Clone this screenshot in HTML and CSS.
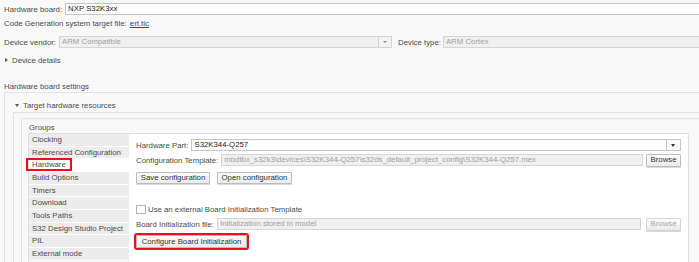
FILE: index.html
```html
<!DOCTYPE html>
<html lang="en">
<head>
    <meta charset="UTF-8">
    <title>Hardware Implementation</title>
    <link rel="stylesheet" href="styles.css">
</head>
<body>
    <div class="top">
        <div class="field-row first">
            <span class="label">Hardware board:</span>
            <div class="input grow edge">NXP S32K3xx</div>
        </div>
        <div class="text-row">Code Generation system target file: <a class="link" href="#">ert.tlc</a></div>
        <div class="field-row spaced">
            <span class="label">Device vendor:</span>
            <div class="combo disabled vendor">
                <span class="value">ARM Compatible</span>
                <span class="arrow"></span>
            </div>
            <span class="label type-label">Device type:</span>
            <div class="input disabled grow edge">ARM Cortex</div>
        </div>
        <div class="toggle-row spaced"><span class="tri right"></span>Device details</div>
        <div class="section-title">Hardware board settings</div>
    </div>

    <div class="panel outer">
        <div class="toggle-row head"><span class="tri down"></span>Target hardware resources</div>
        <div class="panel middle">
            <div class="panel groups">
                <div class="groups-title">Groups</div>
                <div class="groups-box">
                    <ul class="group-list">
                        <li>Clocking</li>
                        <li>Referenced Configuration</li>
                        <li class="selected"><span class="mark">Hardware</span></li>
                        <li>Build Options</li>
                        <li>Timers</li>
                        <li>Download</li>
                        <li>Tools Paths</li>
                        <li>S32 Design Studio Project</li>
                        <li>PIL</li>
                        <li>External mode</li>
                    </ul>
                    <div class="details">
                        <div class="field-row">
                            <span class="label">Hardware Part:</span>
                            <div class="combo grow">
                                <span class="value">S32K344-Q257</span>
                                <span class="arrow dark"></span>
                            </div>
                        </div>
                        <div class="field-row gap3">
                            <span class="label">Configuration Template:</span>
                            <div class="input disabled grow">mbdtbx_s32k3\devices\S32K344-Q257\s32ds_default_project_config\S32K344-Q257.mex</div>
                            <button class="btn browse">Browse</button>
                        </div>
                        <div class="button-row">
                            <button class="btn">Save configuration</button>
                            <button class="btn">Open configuration</button>
                        </div>
                        <div class="check-row">
                            <span class="checkbox"></span>
                            <span>Use an external Board Initialization Template</span>
                        </div>
                        <div class="field-row gap3">
                            <span class="label">Board Initialization file:</span>
                            <div class="input disabled grow">Initialization stored in model</div>
                            <button class="btn browse off">Browse</button>
                        </div>
                        <div class="configure-row">
                            <button class="btn marked">Configure Board Initialization</button>
                        </div>
                    </div>
                </div>
            </div>
        </div>
    </div>
</body>
</html>
```

FILE: styles.css
```css
body {
    margin: 0;
    padding-top: 3px;
    width: 699px;
    height: 262px;
    overflow: hidden;
    font-family: "Liberation Sans", Arial, sans-serif;
    font-size: 7.8px;
    color: #4a4a4a;
    background-color: #f8f8f8;
}

.top {
    padding-left: 4px;
}

.field-row {
    display: flex;
    align-items: center;
    height: 12px;
}

.spaced {
    margin-top: 6px;
}

.field-row.gap3 {
    margin-top: 3px;
}

.label {
    margin-right: 3px;
    white-space: nowrap;
}

.type-label {
    margin-left: 6px;
    margin-right: 2px;
}

.input {
    box-sizing: border-box;
    height: 12px;
    line-height: 10px;
    padding: 0 2px;
    border: 1px solid #c6c6c6;
    background-color: #fff;
    color: #222;
    white-space: nowrap;
    overflow: hidden;
}

.grow {
    flex: 1;
}

.edge {
    margin-right: -6px;
}

.disabled {
    background-color: #f0f0f0;
    border-color: #d6d6d6;
    color: #a0a0a0;
}

.combo {
    box-sizing: border-box;
    display: flex;
    height: 12px;
    border: 1px solid #c6c6c6;
    background-color: #fff;
    color: #222;
}

.combo.disabled {
    background-color: #f0f0f0;
    border-color: #d6d6d6;
    color: #a0a0a0;
}

.combo .value {
    flex: 1;
    line-height: 10px;
    padding: 0 2px;
}

.combo .arrow {
    position: relative;
    width: 12px;
    border-left: 1px solid #d0d0d0;
    background-color: #f3f3f3;
}

.combo .arrow::after {
    content: "";
    position: absolute;
    left: 4px;
    top: 4px;
    border-left: 2px solid transparent;
    border-right: 2px solid transparent;
    border-top: 2px solid #888;
}

.combo .arrow.dark {
    width: 13px;
    background-color: #fafafa;
    border-left-color: #c6c6c6;
}

.combo .arrow.dark::after {
    left: 4px;
    border-left-width: 2.5px;
    border-right-width: 2.5px;
    border-top: 3px solid #333;
}

.vendor {
    width: 333px;
}

.text-row {
    height: 12px;
    line-height: 12px;
    margin-top: 3px;
}

.link {
    color: #1f3fd6;
    text-decoration: underline;
    margin-left: 1px;
}

.toggle-row {
    display: flex;
    align-items: center;
    height: 12px;
}

.tri {
    display: inline-block;
    width: 0;
    height: 0;
    margin-right: 4px;
}

.tri.right {
    border-top: 2px solid transparent;
    border-bottom: 2px solid transparent;
    border-left: 3px solid #555;
    margin-left: 1px;
}

.tri.down {
    border-left: 2px solid transparent;
    border-right: 2px solid transparent;
    border-top: 3px solid #555;
    margin-left: 2px;
    margin-right: 4px;
}

.section-title {
    margin-top: 16px;
    height: 10px;
    line-height: 10px;
}

.panel {
    border: 1px solid #e2e2e2;
    border-right: none;
    border-bottom: none;
}

.outer {
    margin-left: 4px;
    padding-left: 8px;
}

.toggle-row.head {
    margin-top: 6px;
}

.middle {
    margin-top: 1px;
    padding-left: 7px;
    padding-top: 5px;
}

.groups {
    padding-left: 6px;
    padding-top: 3px;
}

.groups-title {
    height: 11px;
    line-height: 11px;
    padding-left: 1px;
}

.groups-box {
    display: flex;
    width: 659px;
    height: 140px;
    border: 1px solid #e0e0e0;
    border-bottom: none;
    background-color: #fff;
}

.group-list {
    list-style: none;
    margin: 0;
    padding: 0;
    width: 100px;
    background-color: #ececec;
}

.group-list li {
    height: 11.67px;
    line-height: 11.67px;
    padding-left: 3px;
    border-bottom: 1px solid #fff;
    white-space: nowrap;
}

.group-list li.selected {
    background-color: #fff;
}

.mark {
    display: inline-block;
    line-height: 9px;
    padding: 0 4px;
    margin: 0 -4px;
    outline: 2px solid #e3121b;
}

.details {
    flex: 1;
    padding: 5px 7px 0 7px;
}

.btn {
    box-sizing: border-box;
    height: 12px;
    padding: 0 5px;
    border: 1px solid #bcbcbc;
    border-radius: 1px;
    background: linear-gradient(#fbfbfb, #ebebeb);
    box-shadow: 0 1px 0 #d8d8d8;
    font-family: "Liberation Sans", Arial, sans-serif;
    font-size: 7.8px;
    line-height: 10px;
    color: #333;
}

.browse {
    width: 35px;
    height: 13px;
    padding: 0;
    margin-left: 3px;
}

.browse.off {
    color: #a8a8a8;
    border-color: #d4d4d4;
    margin-left: 5px;
}

.button-row {
    display: flex;
    gap: 7px;
    margin-top: 6px;
}

.button-row .btn {
    width: 74px;
    padding: 0;
}

.button-row .btn + .btn {
    width: 75px;
}

.check-row {
    display: flex;
    align-items: center;
    height: 12px;
    margin-top: 19px;
}

.checkbox {
    box-sizing: border-box;
    width: 10px;
    height: 9px;
    margin-right: 2px;
    border: 1px solid #b0b0b0;
    background-color: #fff;
}

.configure-row {
    margin-top: 5px;
}

.marked {
    width: 111px;
    height: 13px;
    padding: 0;
    outline: 2px solid #e3121b;
    box-shadow: none;
}
```
